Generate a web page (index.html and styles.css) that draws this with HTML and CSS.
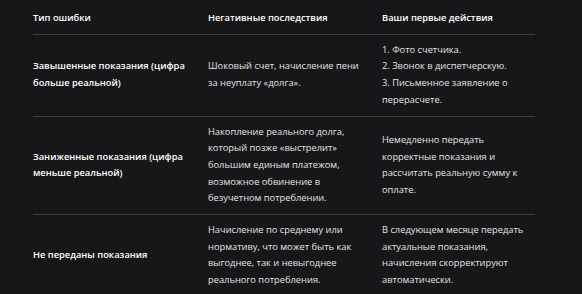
FILE: index.html
```html
<!DOCTYPE html>
<html lang="ru">
<head>
<meta charset="utf-8">
<link rel="stylesheet" href="styles.css">
</head>
<body>
<div class="wrap">
<table class="errors">
<colgroup>
<col class="c1"><col class="c2"><col class="c3">
</colgroup>
<thead>
<tr><th>Тип ошибки</th><th>Негативные последствия</th><th>Ваши первые действия</th></tr>
</thead>
<tbody>
<tr>
<td class="kind">Завышенные показания (цифра больше реальной)</td>
<td>Шоковый счет, начисление пени за неуплату «долга».</td>
<td>1. Фото счетчика.<br>2. Звонок в диспетчерскую.<br>3. Письменное заявление о перерасчете.</td>
</tr>
<tr>
<td class="kind">Заниженные показания (цифра меньше реальной)</td>
<td>Накопление реального долга, который позже «выстрелит» большим единым платежом, возможное обвинение в безучетном потреблении.</td>
<td>Немедленно передать корректные показания и рассчитать реальную сумму к оплате.</td>
</tr>
<tr>
<td class="kind">Не переданы показания</td>
<td>Начисление по среднему или нормативу, что может быть как выгоднее, так и невыгоднее реального потребления.</td>
<td>В следующем месяце передать актуальные показания, начисления скорректируют автоматически.</td>
</tr>
</tbody>
</table>
</div>
</body>
</html>
```
FILE: styles.css
```css
html, body {
  margin: 0;
  padding: 0;
  background: #171719;
}
.wrap {
  padding: 3px 0 0 33px;
}
.errors {
  border-collapse: collapse;
  table-layout: fixed;
  width: 502px;
  font-family: "Open Sans", "Noto Sans", sans-serif;
  font-size: 9.3px;
  line-height: 16.7px;
  color: #e4e4e6;
}
.c1 { width: 175px; }
.c2 { width: 174px; }
.c3 { width: 153px; }
.errors th,
.errors td {
  padding: 7px 12px 7px 0;
  text-align: left;
  vertical-align: middle;
  border-bottom: 1px solid #3a3a3d;
}
.errors th:last-child,
.errors td:last-child {
  padding-right: 4px;
}
.errors th {
  font-weight: 600;
  color: #ffffff;
}
.errors td.kind {
  font-weight: 600;
  color: #ffffff;
}
```
